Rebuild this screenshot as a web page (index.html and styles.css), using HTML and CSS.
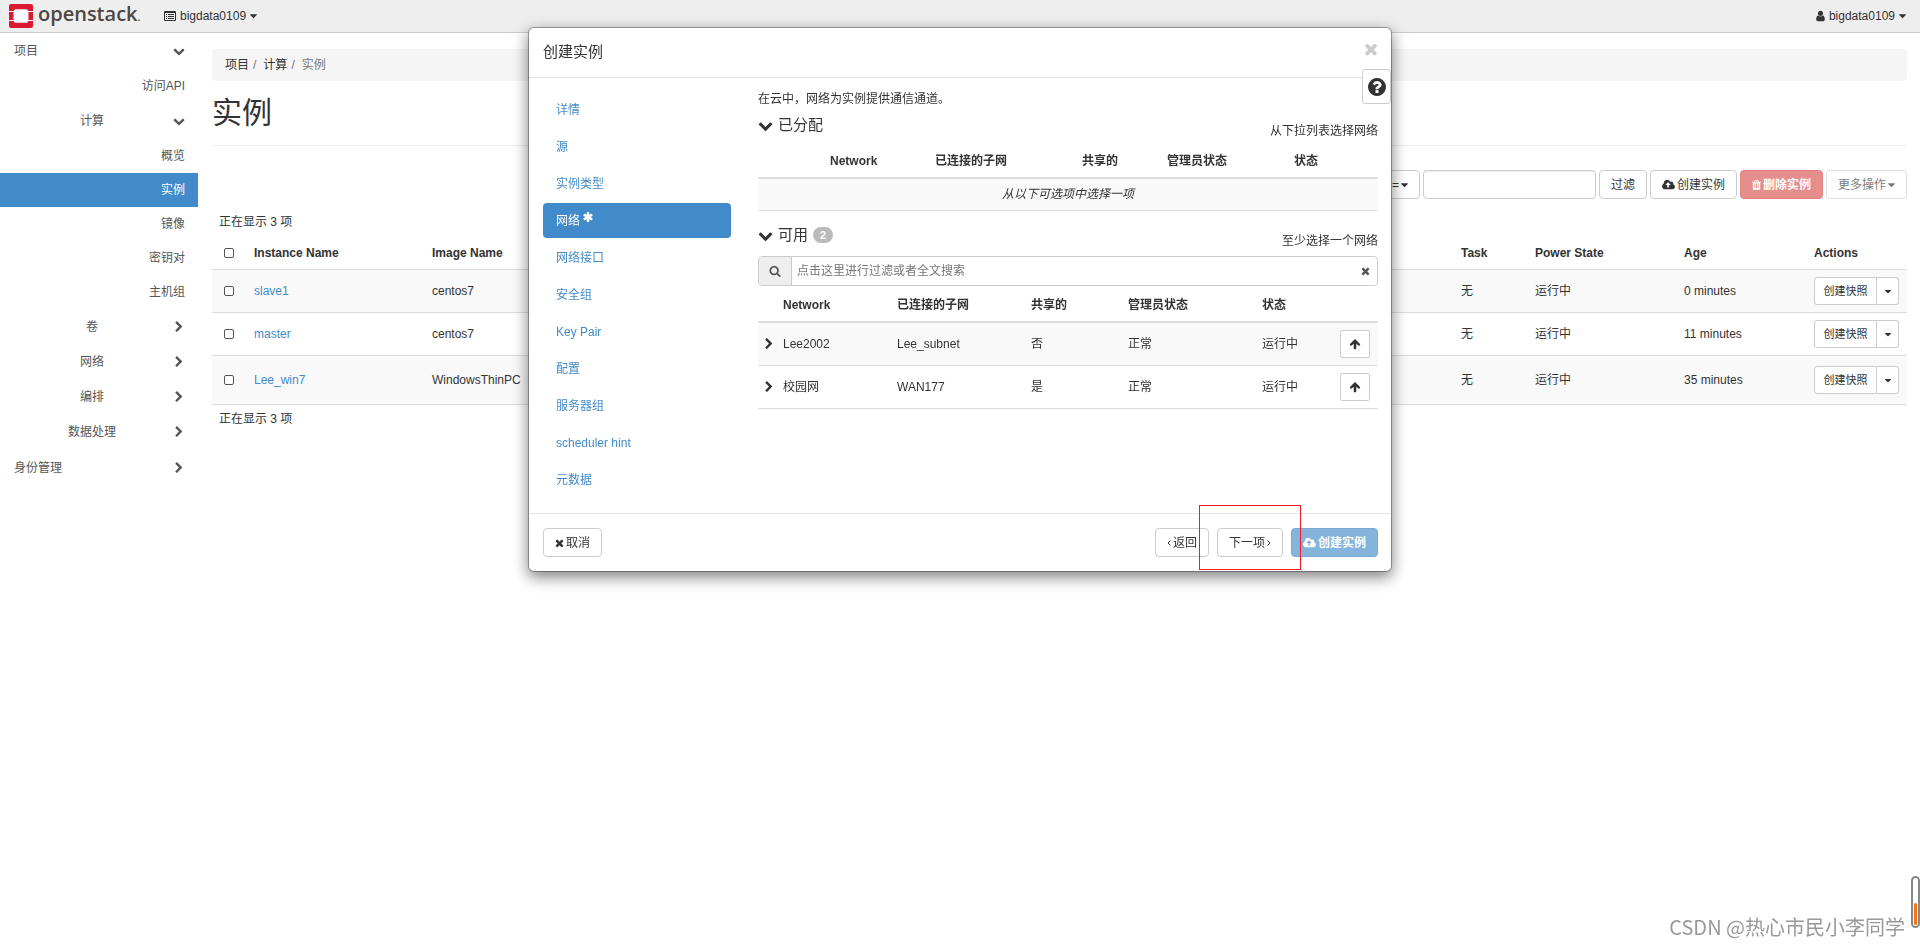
FILE: index.html
```html
<!DOCTYPE html>
<html lang="zh-CN">
<head>
<meta charset="utf-8">
<title>实例 - OpenStack Dashboard</title>
<link rel="stylesheet" href="styles.css">
</head>
<body>
<svg class="sprite" aria-hidden="true">
  <symbol id="i-down" viewBox="0 0 1792 1792"><path d="M1683 808l-742 741q-19 19-45 19t-45-19l-742-741q-19-19-19-45.500t19-45.500l166-165q19-19 45-19t45 19l531 531 531-531q19-19 45-19t45 19l166 165q19 19 19 45.500t-19 45.500z"/></symbol>
  <symbol id="i-right" viewBox="0 0 1792 1792"><path d="M1363 877l-742 742q-19 19-45 19t-45-19l-166-166q-19-19-19-45t19-45l531-531-531-531q-19-19-19-45t19-45l166-166q19-19 45-19t45 19l742 742q19 19 19 45t-19 45z"/></symbol>
  <symbol id="i-times" viewBox="192 0 1408 1792"><path d="M1490 1322q0 40-28 68l-136 136q-28 28-68 28t-68-28l-294-294-294 294q-28 28-68 28t-68-28l-136-136q-28-28-28-68t28-68l294-294-294-294q-28-28-28-68t28-68l136-136q28-28 68-28t68 28l294 294 294-294q28-28 68-28t68 28l136 136q28 28 28 68t-28 68l-294 294 294 294q28 28 28 68z"/></symbol>
  <symbol id="i-caret" viewBox="384 0 1024 1792"><path d="M1408 704q0 26-19 45l-448 448q-19 19-45 19t-45-19l-448-448q-19-19-19-45t19-45 45-19h896q26 0 45 19t19 45z"/></symbol>
  <symbol id="i-search" viewBox="0 0 1792 1792"><path d="M1216 832q0-185-131.500-316.500t-316.500-131.500-316.500 131.500-131.500 316.500 131.500 316.500 316.500 131.500 316.500-131.500 131.500-316.500zm512 832q0 52-38 90t-90 38q-54 0-90-38l-343-342q-179 124-399 124-143 0-273.500-55.500t-225-150-150-225-55.500-273.500 55.500-273.500 150-225 225-150 273.500-55.500 273.500 55.500 225 150 150 225 55.500 273.500q0 220-124 399l343 343q37 37 37 90z"/></symbol>
  <symbol id="i-cloud" viewBox="-64 0 1920 1792"><path d="M1216 864q0-14-9-23l-352-352q-9-9-23-9t-23 9l-351 351q-10 12-10 24 0 14 9 23t23 9h224v352q0 13 9.500 22.500t22.500 9.500h192q13 0 22.500-9.500t9.500-22.500v-352h224q13 0 22.500-9.500t9.500-22.500zm640 288q0 159-112.500 271.500t-271.500 112.500h-1088q-185 0-316.500-131.500t-131.500-316.500q0-130 70-240t188-165q-2-30-2-43 0-212 150-362t362-150q156 0 285.500 87t188.500 231q71-62 166-62 106 0 181 75t75 181q0 76-41 138 130 31 213.500 135.500t83.500 238.500z"/></symbol>
  <symbol id="i-user" viewBox="256 0 1280 1792"><path d="M1536 1399q0 109-62.500 187t-150.500 78h-854q-88 0-150.500-78t-62.500-187q0-85 8.500-160.500t31.500-152 58.500-131 94-89 134.500-34.500q131 128 313 128t313-128q76 0 134.500 34.500t94 89 58.500 131 31.500 152 8.500 160.500zm-256-887q0 159-112.500 271.500t-271.500 112.500-271.500-112.500-112.500-271.500 112.500-271.500 271.500-112.500 271.500 112.500 112.500 271.500z"/></symbol>
  <symbol id="i-trash" viewBox="192 0 1408 1792"><path d="M704 1376v-704q0-14-9-23t-23-9h-64q-14 0-23 9t-9 23v704q0 14 9 23t23 9h64q14 0 23-9t9-23zm256 0v-704q0-14-9-23t-23-9h-64q-14 0-23 9t-9 23v704q0 14 9 23t23 9h64q14 0 23-9t9-23zm256 0v-704q0-14-9-23t-23-9h-64q-14 0-23 9t-9 23v704q0 14 9 23t23 9h64q14 0 23-9t9-23zm-544-992h448l-48-117q-7-9-17-11h-317q-10 2-17 11zm928 32v64q0 14-9 23t-23 9h-96v948q0 83-47 143.500t-113 60.500h-832q-66 0-113-58.500t-47-141.500v-952h-96q-14 0-23-9t-9-23v-64q0-14 9-23t23-9h309l70-167q15-37 54-63t79-26h320q40 0 79 26t54 63l70 167h309q14 0 23 9t9 23z"/></symbol>
  <symbol id="i-help" viewBox="128 128 1536 1536"><path d="M1024 1376v-192q0-14-9-23t-23-9h-192q-14 0-23 9t-9 23v192q0 14 9 23t23 9h192q14 0 23-9t9-23zm256-672q0-88-55.500-163t-138.500-116-170-41q-243 0-371 213-15 24 8 42l132 100q7 6 19 6 16 0 25-12 53-68 86-92 34-24 86-24 48 0 85.500 26t37.500 59q0 38-20 61t-68 45q-63 28-115.500 86.500t-52.500 125.500v36q0 14 9 23t23 9h192q14 0 23-9t9-23q0-19 21.500-49.500t54.500-49.500q32-18 49-28.500t46-35 44.500-48 28-60.500 12.500-81zm384 192q0 209-103 385.500t-279.500 279.500-385.500 103-385.500-103-279.500-279.500-103-385.500 103-385.500 279.500-279.500 385.500-103 385.500 103 279.500 279.500 103 385.500z"/></symbol>
  <symbol id="i-up" viewBox="0 0 1792 1792"><path d="M1675 971q0 51-37 90l-75 75q-38 38-91 38-54 0-90-38l-294-293v704q0 52-37.500 84.500t-90.500 32.500h-128q-53 0-90.500-32.500t-37.500-84.500v-704l-294 293q-36 38-90 38t-90-38l-75-75q-38-38-38-90 0-53 38-91l651-651q35-37 90-37 54 0 91 37l651 651q37 39 37 91z"/></symbol>
  <symbol id="i-star" viewBox="128 128 1536 1536"><path d="M1546 1050q46 26 59.500 77.500t-12.500 97.500l-64 110q-26 46-77.500 59.500t-97.500-12.500l-266-153v307q0 52-38 90t-90 38h-128q-52 0-90-38t-38-90v-307l-266 153q-46 26-97.500 12.500t-77.500-59.500l-64-110q-26-46-12.500-97.500t59.500-77.500l266-154-266-154q-46-26-59.500-77.500t12.500-97.500l64-110q26-46 77.500-59.500t97.500 12.500l266 153v-307q0-52 38-90t90-38h128q52 0 90 38t38 90v307l266-153q46-26 97.500-12.500t77.500 59.500l64 110q26 46 12.500 97.500t-59.500 77.500l-266 154z"/></symbol>
  <symbol id="i-list" viewBox="0 0 12 10"><path fill-rule="evenodd" d="M1 0h10a1 1 0 0 1 1 1v8a1 1 0 0 1-1 1H1a1 1 0 0 1-1-1V1a1 1 0 0 1 1-1zM1 2v7h10V2zM2 3h1v1H2zM4 3h6v1H4zM2 5h1v1H2zM4 5h6v1H4zM2 7h1v1H2zM4 7h6v1H4z"/></symbol>
  <symbol id="i-angle-left" viewBox="0 0 4 8"><path d="M3.500 1.500L1 4l2.500 2.500" fill="none" stroke="currentColor"/></symbol>
  <symbol id="i-angle-right" viewBox="0 0 4 8"><path d="M.5 1.500L3 4 .5 6.500" fill="none" stroke="currentColor"/></symbol>
</svg>

<header class="topbar">
  <a class="brand" href="#">
    <svg class="brand-mark" viewBox="0 0 24 24" aria-hidden="true"><g fill="#da1a32"><path d="M2 0h20a2 2 0 0 1 2 2v5h-5a1.500 1.500 0 0 0-1.500-1.500h-11A1.500 1.500 0 0 0 5 7H0V2a2 2 0 0 1 2-2z"/><path d="M2 24h20a2 2 0 0 0 2-2v-5h-5a1.500 1.500 0 0 1-1.500 1.500h-11A1.500 1.500 0 0 1 5 17H0v5a2 2 0 0 0 2 2z"/><path d="M0 8h4.500v8H0zM19.500 8H24v8h-4.500z"/></g><path fill="#fff" d="M6.500 5.500h11A1.500 1.500 0 0 1 19 7v10a1.500 1.500 0 0 1-1.500 1.500h-11A1.500 1.500 0 0 1 5 17V7a1.500 1.500 0 0 1 1.500-1.500z"/></svg>
    <span class="brand-name">openstack<small>.</small></span>
  </a>
  <button class="menu" type="button"><svg class="ic-list"><use href="#i-list"/></svg>bigdata0109<svg class="ic-caret"><use href="#i-caret"/></svg></button>
  <button class="menu menu-user" type="button"><svg class="ic-user"><use href="#i-user"/></svg>bigdata0109<svg class="ic-caret"><use href="#i-caret"/></svg></button>
</header>

<div class="page">
  <nav class="side">
    <a class="group open root" href="#"><span>项目</span><svg class="ic"><use href="#i-down"/></svg></a>
    <a class="panel" href="#">访问API</a>
    <a class="group open" href="#"><span>计算</span><svg class="ic"><use href="#i-down"/></svg></a>
    <a class="panel" href="#">概览</a>
    <a class="panel active" href="#">实例</a>
    <a class="panel" href="#">镜像</a>
    <a class="panel" href="#">密钥对</a>
    <a class="panel" href="#">主机组</a>
    <a class="group" href="#"><span>卷</span><svg class="ic"><use href="#i-right"/></svg></a>
    <a class="group" href="#"><span>网络</span><svg class="ic"><use href="#i-right"/></svg></a>
    <a class="group" href="#"><span>编排</span><svg class="ic"><use href="#i-right"/></svg></a>
    <a class="group" href="#"><span>数据处理</span><svg class="ic"><use href="#i-right"/></svg></a>
    <a class="group root" href="#"><span>身份管理</span><svg class="ic"><use href="#i-right"/></svg></a>
  </nav>

  <main class="main">
    <ol class="crumbs"><li><a href="#">项目</a></li><li><a href="#">计算</a></li><li>实例</li></ol>
    <div class="page-head"><h1>实例</h1></div>
    <div class="toolbar">
      <button class="btn" type="button">= <svg class="ic-caret"><use href="#i-caret"/></svg></button>
      <input class="filter" type="text" aria-label="过滤">
      <button class="btn" type="button">过滤</button>
      <button class="btn" type="button"><svg class="ic-cloud"><use href="#i-cloud"/></svg>创建实例</button>
      <button class="btn danger" type="button" disabled><svg class="ic-n"><use href="#i-trash"/></svg>删除实例</button>
      <button class="btn muted" type="button" disabled>更多操作<svg class="ic-caret"><use href="#i-caret"/></svg></button>
    </div>
    <p class="count">正在显示 3 项</p>
    <table class="instances">
      <colgroup><col class="c-check"><col class="c-name"><col class="c-image"><col><col class="c-task"><col class="c-power"><col class="c-age"><col class="c-actions"></colgroup>
      <thead><tr><th><input type="checkbox" aria-label="全选"></th><th>Instance Name</th><th>Image Name</th><th></th><th>Task</th><th>Power State</th><th>Age</th><th>Actions</th></tr></thead>
      <tbody>
        <tr><td><input type="checkbox" aria-label="slave1"></td><td><a href="#">slave1</a></td><td>centos7</td><td></td><td>无</td><td>运行中</td><td>0 minutes</td><td><div class="split"><button type="button">创建快照</button><button type="button" aria-label="更多"><svg class="ic-caret"><use href="#i-caret"/></svg></button></div></td></tr>
        <tr><td><input type="checkbox" aria-label="master"></td><td><a href="#">master</a></td><td>centos7</td><td></td><td>无</td><td>运行中</td><td>11 minutes</td><td><div class="split"><button type="button">创建快照</button><button type="button" aria-label="更多"><svg class="ic-caret"><use href="#i-caret"/></svg></button></div></td></tr>
        <tr class="tall"><td><input type="checkbox" aria-label="Lee_win7"></td><td><a href="#">Lee_win7</a></td><td>WindowsThinPC</td><td></td><td>无</td><td>运行中</td><td>35 minutes</td><td><div class="split"><button type="button">创建快照</button><button type="button" aria-label="更多"><svg class="ic-caret"><use href="#i-caret"/></svg></button></div></td></tr>
      </tbody>
    </table>
    <p class="count below">正在显示 3 项</p>
  </main>
</div>

<section class="modal" role="dialog" aria-labelledby="modal-title">
  <header class="modal-head">
    <h2 id="modal-title">创建实例</h2>
    <button class="close" type="button" aria-label="关闭"><svg><use href="#i-times"/></svg></button>
  </header>
  <button class="help" type="button" aria-label="帮助"><svg><use href="#i-help"/></svg></button>
  <div class="modal-body">
    <nav class="steps">
      <a href="#">详情</a>
      <a href="#">源</a>
      <a href="#">实例类型</a>
      <a class="active" href="#">网络<svg class="ic-star"><use href="#i-star"/></svg></a>
      <a href="#">网络接口</a>
      <a href="#">安全组</a>
      <a href="#">Key Pair</a>
      <a href="#">配置</a>
      <a href="#">服务器组</a>
      <a href="#">scheduler hint</a>
      <a href="#">元数据</a>
    </nav>
    <div class="content">
      <p class="intro">在云中，网络为实例提供通信通道。</p>
      <div class="section-head">
        <h3><svg class="ic-head"><use href="#i-down"/></svg>已分配</h3>
        <span class="hint">从下拉列表选择网络</span>
      </div>
      <table class="nets allocated">
        <colgroup><col class="a1"><col class="a2"><col class="a3"><col class="a4"><col class="a5"><col></colgroup>
        <thead><tr><th></th><th>Network</th><th>已连接的子网</th><th>共享的</th><th>管理员状态</th><th>状态</th></tr></thead>
        <tbody><tr><td class="empty" colspan="6"><em>从以下可选项中选择一项</em></td></tr></tbody>
      </table>
      <div class="section-head">
        <h3><svg class="ic-head"><use href="#i-down"/></svg>可用<span class="badge">2</span></h3>
        <span class="hint">至少选择一个网络</span>
      </div>
      <div class="search">
        <span class="addon"><svg class="ic"><use href="#i-search"/></svg></span>
        <input type="text" placeholder="点击这里进行过滤或者全文搜索" aria-label="搜索">
        <button type="button" aria-label="清除"><svg class="ic-n"><use href="#i-times"/></svg></button>
      </div>
      <table class="nets available">
        <colgroup><col class="b1"><col class="b2"><col class="b3"><col class="b4"><col class="b5"><col><col class="b7"></colgroup>
        <thead><tr><th></th><th>Network</th><th>已连接的子网</th><th>共享的</th><th>管理员状态</th><th>状态</th><th></th></tr></thead>
        <tbody>
          <tr><td><svg class="ic"><use href="#i-right"/></svg></td><td>Lee2002</td><td>Lee_subnet</td><td>否</td><td>正常</td><td>运行中</td><td><button class="up" type="button" aria-label="分配"><svg class="ic"><use href="#i-up"/></svg></button></td></tr>
          <tr><td><svg class="ic"><use href="#i-right"/></svg></td><td>校园网</td><td>WAN177</td><td>是</td><td>正常</td><td>运行中</td><td><button class="up" type="button" aria-label="分配"><svg class="ic"><use href="#i-up"/></svg></button></td></tr>
        </tbody>
      </table>
    </div>
  </div>
  <footer class="modal-foot">
    <button class="btn cancel" type="button"><svg class="ic-n"><use href="#i-times"/></svg>取消</button>
    <button class="btn" type="button"><svg class="ic-angle"><use href="#i-angle-left"/></svg>返回</button>
    <button class="btn" type="button">下一项<svg class="ic-angle"><use href="#i-angle-right"/></svg></button>
    <button class="btn primary" type="button" disabled><svg class="ic-cloud"><use href="#i-cloud"/></svg>创建实例</button>
    <span class="marker"></span>
  </footer>
</section>

<div class="scroll-widget"><span></span></div>
<div class="watermark">CSDN @热心市民小李同学</div>
</body>
</html>
```
FILE: styles.css
```css
* { box-sizing: border-box; }
body {
  margin: 0;
  min-height: 100vh;
  background: #fff;
  color: #333;
  font: 12px/18px "Liberation Sans", "Noto Sans CJK SC", sans-serif;
}
a { color: #428bca; text-decoration: none; }
button, input { font: inherit; color: inherit; }
button { cursor: pointer; }
h1, h2, h3, p, ol { margin: 0; padding: 0; font-weight: 400; }
svg { display: block; flex: none; fill: currentColor; }
.sprite { position: absolute; width: 0; height: 0; }

.ic { width: 12px; height: 12px; }
.ic-n { width: 9px; height: 12px; }
.ic-caret { width: 7px; height: 12px; }
.ic-cloud { width: 13px; height: 12px; }
.ic-user { width: 9px; height: 12px; }
.ic-list { width: 12px; height: 10px; }
.ic-angle { width: 4px; height: 8px; }
.ic-head { width: 15px; height: 15px; }
.ic-star { width: 10px; height: 10px; margin-bottom: 8px; }

/* top bar */
.topbar {
  display: flex;
  align-items: center;
  height: 33px;
  padding: 0 14px 0 9px;
  background: #eee;
  border-bottom: 1px solid #ccc;
}
.brand { display: flex; align-items: center; gap: 5px; width: 155px; color: #4f4742; }
.brand-mark { width: 24px; height: 24px; }
.brand-name { font: 600 20px/24px "Open Sans", sans-serif; padding-bottom: 2px; }
.brand-name small { font-size: 12px; font-weight: 400; }
.menu {
  display: flex;
  align-items: center;
  gap: 4px;
  padding: 0;
  border: 0;
  background: none;
}
.menu-user { margin-left: auto; }

.page { display: flex; }

/* side navigation */
.side { flex: none; width: 198px; display: flex; flex-direction: column; }
.side a { color: #555; }
.group {
  display: flex;
  align-items: center;
  height: 35px;
  padding: 0 13px 0 11px;
}
.group.root { height: 37px; padding-left: 14px; }
.group.open { height: 36px; }
.group span { flex: 1; text-align: center; }
.group.root span { text-align: left; }
.panel { padding: 8px 13px; text-align: right; }
.side .panel.active { background: #428bca; color: #fff; }

/* main column */
.main { flex: 1; min-width: 0; padding: 16px 13px 0 14px; }
.crumbs {
  display: flex;
  padding: 7px 13px;
  list-style: none;
  background: #f5f5f5;
  border-radius: 4px;
  color: #777;
}
.crumbs a { color: #333; }
.crumbs li + li::before { content: "/"; padding: 0 7px 0 4px; }
.page-head { padding: 12px 0; border-bottom: 1px solid #eee; }
h1 { font-size: 30px; line-height: 40px; }

.toolbar { display: flex; justify-content: flex-end; gap: 3px; margin-top: 24px; }
.btn {
  display: flex;
  align-items: center;
  gap: 2px;
  height: 29px;
  padding: 0 11px;
  background: #fff;
  border: 1px solid #ccc;
  border-radius: 4px;
}
.filter {
  width: 173px;
  height: 29px;
  padding: 0 11px;
  border: 1px solid #ccc;
  border-radius: 4px;
  box-shadow: inset 0 1px 1px rgba(0, 0, 0, .075);
}
.btn.danger { background: #d9534f; border-color: #d43f3a; color: #fff; opacity: .65; font-weight: 700; }
.btn.muted { opacity: .65; }
.btn.primary { background: #428bca; border-color: #357ebd; color: #fff; opacity: .65; font-weight: 700; }

.count { padding: 0 7px; margin-top: 14px; }
.count.below { margin-top: 5px; }

table { width: 100%; table-layout: fixed; border-spacing: 0; }
th, td { text-align: left; vertical-align: middle; }

.instances th { padding: 13px 8px 7px; }
.instances td { padding: 7px 8px; border-top: 1px solid #ddd; }
.instances tr.tall td { padding: 10px 8px; border-bottom: 1px solid #ddd; }
.instances tbody tr:nth-child(odd) { background: #f9f9f9; }
.c-check { width: 34px; }
.c-name { width: 178px; }
.c-image { width: 130px; }
.c-task { width: 74px; }
.c-power { width: 149px; }
.c-age { width: 130px; }
.c-actions { width: 101px; }
input[type="checkbox"] {
  appearance: none;
  display: block;
  width: 10px;
  height: 10px;
  margin: 0 0 0 4px;
  border: 1px solid #555;
  border-radius: 2px;
  background: #fff;
}
.split { display: flex; }
.split button {
  display: flex;
  align-items: center;
  justify-content: center;
  height: 28px;
  padding: 0;
  background: #fff;
  border: 1px solid #ccc;
}
.split button:first-child { flex: 1; font-size: 11px; border-radius: 3px 0 0 3px; }
.split button:last-child { width: 22px; border-left: 0; border-radius: 0 3px 3px 0; }
.split svg { width: 6px; height: 11px; }

/* launch dialog */
.modal {
  position: fixed;
  top: 27px;
  left: 50%;
  width: 45%;
  transform: translateX(-50%);
  background: #fff;
  background-clip: padding-box;
  border: 1px solid rgba(0, 0, 0, .3);
  border-radius: 6px;
  box-shadow: 0 5px 15px rgba(0, 0, 0, .5);
}
.modal-head {
  display: flex;
  align-items: flex-start;
  justify-content: space-between;
  padding: 14px 13px 15px 14px;
  border-bottom: 1px solid #e5e5e5;
}
.modal-head h2 { font-size: 15px; line-height: 20px; }
.close { display: flex; height: 14px; padding: 0; border: 0; background: none; color: #ccc; align-items: center; }
.close svg { width: 14px; height: 18px; }
.help {
  position: absolute;
  top: 41px;
  right: 0;
  display: flex;
  align-items: center;
  justify-content: center;
  width: 29px;
  height: 35px;
  padding: 0;
  background: #fff;
  border: 1px solid #ccc;
  border-radius: 3px;
}
.help svg { width: 18px; height: 18px; }
.modal-body { display: flex; gap: 27px; padding: 12px 13px 16px 14px; }
.steps { flex: none; width: 188px; padding-top: 2px; display: flex; flex-direction: column; gap: 2px; }
.steps a { display: flex; align-items: center; gap: 3px; height: 35px; padding: 0 13px; border-radius: 4px; }
.steps .active { background: #428bca; color: #fff; }
.content { flex: 1; min-width: 0; }

.section-head { display: flex; justify-content: space-between; height: 38px; padding-top: 7px; }
.section-head h3 { display: flex; align-items: center; gap: 5px; height: 20px; font-size: 15px; line-height: 20px; }
.hint { padding-top: 7px; }
.badge {
  padding: 0 7px;
  border-radius: 8px;
  background: #bbb;
  color: #fff;
  font-size: 11px;
  line-height: 16px;
  font-weight: 700;
}
.nets th { border-bottom: 2px solid #ddd; padding: 6px 0 7px; }
.nets td { border-bottom: 1px solid #ddd; padding: 7px 0; }
.nets tbody tr:first-child { background: #f9f9f9; }
.allocated { margin-bottom: 7px; }
.nets td.empty { text-align: center; padding: 6px 0 7px; }
.a1 { width: 72px; }
.a2 { width: 105px; }
.a3 { width: 147px; }
.a4 { width: 85px; }
.a5 { width: 127px; }
.b1 { width: 25px; }
.b2 { width: 114px; }
.b3 { width: 134px; }
.b4 { width: 97px; }
.b5 { width: 134px; }
.b7 { width: 38px; }
.available { margin-top: 4px; }
.available td:first-child { padding-left: 5px; }
.up {
  display: flex;
  align-items: center;
  justify-content: center;
  width: 30px;
  height: 28px;
  padding: 0;
  background: #fff;
  border: 1px solid #ccc;
  border-radius: 2px;
}

.search {
  display: flex;
  align-items: stretch;
  height: 30px;
  border: 1px solid #ccc;
  border-radius: 4px;
  overflow: hidden;
}
.addon {
  display: flex;
  align-items: center;
  justify-content: center;
  width: 33px;
  background: #eee;
  border-right: 1px solid #ccc;
  color: #555;
}
.search input { flex: 1; min-width: 0; padding: 0 5px; border: 0; outline: 0; background: none; }
.search input::placeholder { color: #777; opacity: 1; }
.search button { display: flex; align-items: center; padding: 0 7px; border: 0; background: none; color: #555; }

.modal-foot {
  position: relative;
  display: flex;
  gap: 8px;
  padding: 14px 13px 14px 14px;
  border-top: 1px solid #e5e5e5;
}
.cancel { margin-right: auto; }
.marker {
  position: absolute;
  top: -9px;
  right: 90px;
  width: 102px;
  height: 65px;
  border: 1px solid #ed1c24;
}

.scroll-widget {
  position: fixed;
  right: 0;
  bottom: 18px;
  display: flex;
  align-items: flex-end;
  width: 9px;
  height: 52px;
  padding: 1px;
  border: 2px solid #888;
  border-radius: 5px;
}
.scroll-widget span { flex: 1; height: 22px; border-radius: 2px; background: #f97316; }
.watermark {
  position: fixed;
  right: 15px;
  bottom: 5px;
  color: #999;
  font: 20px/28px "Noto Sans CJK SC", sans-serif;
}
```
